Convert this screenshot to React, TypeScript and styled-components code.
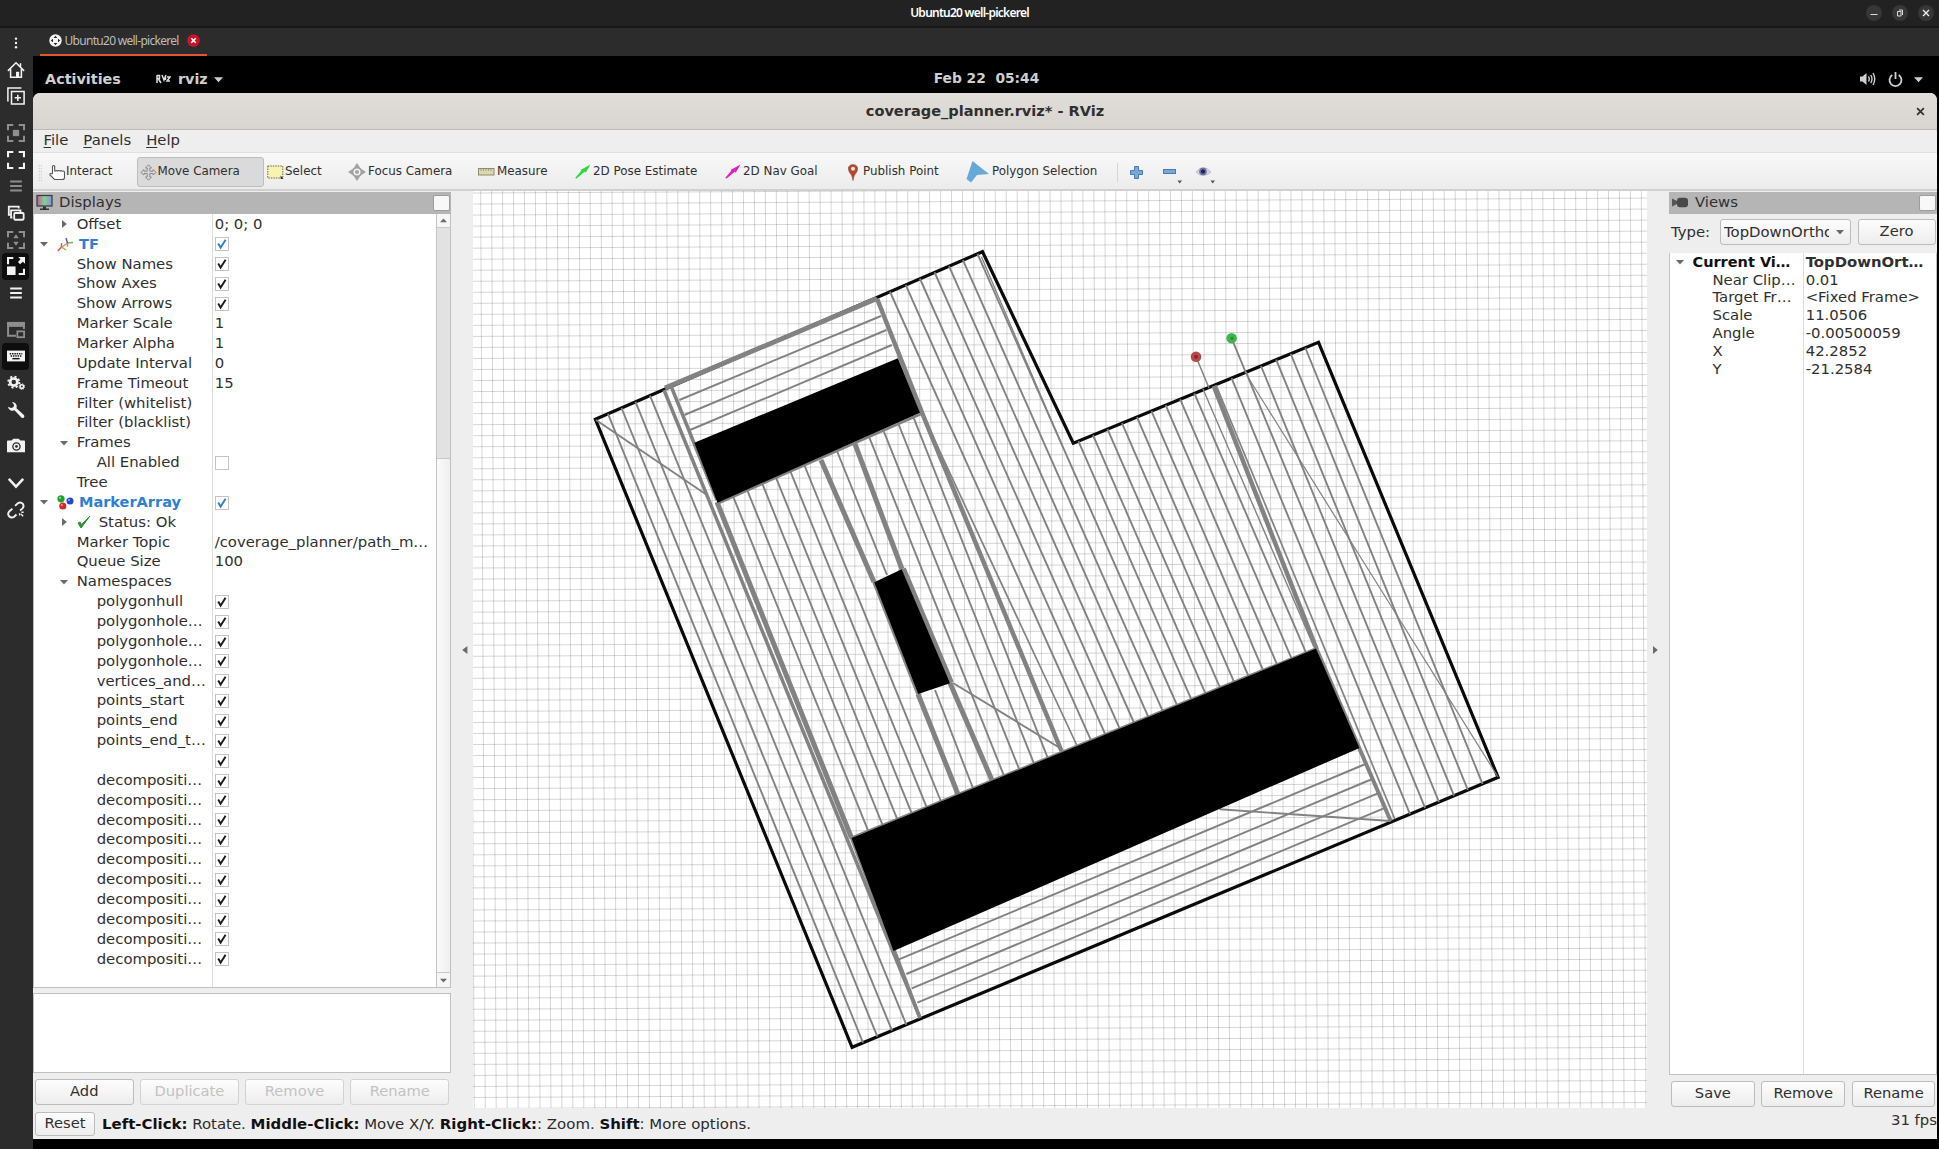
import React from "react";
import styled, { createGlobalStyle, css } from "styled-components";

const Global = createGlobalStyle`
  *, *::before, *::after { box-sizing: border-box; }
  body { margin: 0; background: #000; overflow: hidden; }
`;

/* ---------- shell ---------- */
const Screen = styled.div`
  width: 1939px;
  height: 1149px;
  display: flex;
  flex-direction: column;
  background: #2c2c2c;
  color: #2f2f2f;
  font-family: "DejaVu Sans", sans-serif;
  font-size: 14.85px;
  line-height: 1;
  white-space: nowrap;
`;
const HostBar = styled.header`
  height: 28px;
  flex: none;
  display: grid;
  grid-template-columns: 1fr auto 1fr;
  align-items: center;
  background: #222;
  border-bottom: 2px solid #181818;
  color: #fff;
  font: 600 12px "Noto Sans", sans-serif;
  letter-spacing: -0.75px;
  padding-bottom: 1px;
`;
const HostButtons = styled.div`
  display: flex;
  justify-content: flex-end;
  gap: 10px;
  padding-right: 5px;
`;
const RoundButton = styled.span`
  width: 16px;
  height: 16px;
  border-radius: 50%;
  background: #373737;
  display: grid;
  place-items: center;
`;
const HostBody = styled.div`
  flex: 1;
  display: flex;
  min-height: 0;
`;
const Rail = styled.nav`
  width: 33px;
  flex: none;
  display: flex;
  flex-direction: column;
  align-items: flex-start;
  padding: 1.5px 0 0 2px;
  background: #2c2c2c;
`;
const RailItem = styled.div<{ $gap?: number; $on?: boolean; $dim?: boolean }>`
  width: 27px;
  height: 26.7px;
  flex: none;
  margin-top: ${(p) => p.$gap ?? 0}px;
  border-radius: 4px;
  background: ${(p) => (p.$on ? "#0e0e0e" : "transparent")};
  color: ${(p) => (p.$dim ? "#8e8e8e" : "#f2f2f2")};
  display: grid;
  place-items: center;
`;
const Guest = styled.div`
  flex: 1;
  min-width: 0;
  display: flex;
  flex-direction: column;
  background: #000;
`;
const TabStrip = styled.div`
  height: 27.5px;
  flex: none;
  background: #2c2c2c;
  padding-left: 7px;
`;
const Tab = styled.div`
  width: 167px;
  height: 27.5px;
  display: flex;
  align-items: center;
  padding-left: 9px;
  border-bottom: 2px solid #e2572b;
  color: #bdbdbd;
  font: 400 12px "Noto Sans", sans-serif;
`;
const TabText = styled.span`
  width: 116px;
  margin: 0 6px 0 2.5px;
  letter-spacing: -0.71px;
`;
const GnomeBar = styled.div`
  height: 37.5px;
  flex: none;
  display: grid;
  grid-template-columns: 1fr auto 1fr;
  align-items: center;
  padding: 10px 16px 0 12px;
  color: #cfcfcf;
  font-weight: 700;
  font-size: 14.4px;
`;
const GnomeLeft = styled.div`
  display: flex;
  align-items: center;
`;
const AppName = styled.span`
  margin: 0 6px 0 7px;
`;
const GnomeRight = styled.div`
  display: flex;
  justify-content: flex-end;
  align-items: center;
  gap: 11px;
`;
const Clock = styled.span`
  white-space: pre;
  font-size: 13.8px;
  padding-left: 5px;
`;

/* ---------- window ---------- */
const Win = styled.main`
  height: 1046px;
  margin-right: 2px;
  flex: none;
  display: flex;
  flex-direction: column;
  background: #eee;
  border-radius: 7px 7px 0 0;
  overflow: hidden;
`;
const WinTitle = styled.div`
  height: 36.5px;
  flex: none;
  display: grid;
  grid-template-columns: 1fr auto 1fr;
  align-items: center;
  background: linear-gradient(#e1deda, #d8d5d0);
  border-bottom: 1px solid #bfbbb6;
  padding-top: 1px;
  font-weight: 700;
  font-size: 14.55px;
`;
const CloseBox = styled.div`
  display: flex;
  justify-content: flex-end;
  padding-right: 12px;
`;
const MenuBar = styled.div`
  height: 23.5px;
  flex: none;
  display: flex;
  gap: 15px;
  padding: 3.5px 0 0 10.5px;
  border-bottom: 1px solid #e0e0e0;
`;
const Mnemonic = styled.span`
  text-decoration: underline;
  text-underline-offset: 2px;
`;
const ToolBar = styled.div`
  height: 38px;
  flex: none;
  display: flex;
  align-items: center;
  background: linear-gradient(#f8f8f8, #ececec);
  border-bottom: 2px solid #d0d0d0;
  padding: 2px 0 0 5px;
  font-size: 11.9px;
`;
const Grip = styled.div`
  width: 4px;
  height: 17px;
  margin-right: 3.5px;
  background-image: radial-gradient(#cfcfcf 0.7px, transparent 0.9px);
  background-size: 2.5px 3px;
`;
const Tool = styled.div<{ $w: number; $iconW: number; $active?: boolean }>`
  width: ${(p) => p.$w}px;
  height: 30px;
  flex: none;
  display: grid;
  grid-template-columns: ${(p) => p.$iconW}px auto;
  align-items: center;
  justify-content: start;
  padding-left: 3px;
  ${(p) =>
    p.$active &&
    css`
      padding-left: 2px;
      background: #dadada;
      border: 1px solid #bdbdbd;
      border-radius: 3px;
    `}
`;
const ToolRule = styled.div`
  width: 1px;
  height: 19px;
  background: #d6d6d6;
  margin-right: 12px;
`;
const SmallTool = styled.div`
  width: 33px;
  display: flex;
  align-items: center;
`;
const Work = styled.div`
  flex: 1;
  min-height: 0;
  display: flex;
`;

/* ---------- docks ---------- */
const Dock = styled.section<{ $w: number }>`
  width: ${(p) => p.$w}px;
  flex: none;
  display: flex;
  flex-direction: column;
  padding-top: 1px;
`;
const DockTitle = styled.div`
  height: 22px;
  flex: none;
  display: flex;
  align-items: center;
  background: #b5b5b5;
  padding: 0 1.5px 1px 3px;
  gap: 6px;
`;
const FloatBox = styled.span`
  width: 17px;
  height: 16px;
  margin-left: auto;
  background: #f8f8f8;
  border: 1px solid #9c9c9c;
  border-radius: 2px;
`;
const Tree = styled.div<{ $h: number }>`
  height: ${(p) => p.$h}px;
  flex: none;
  display: flex;
  background: #fff;
  border: 1px solid #c0c0c0;
  border-width: 0 1px 1px 1px;
`;
const Rows = styled.div<{ $split: number }>`
  flex: 1;
  min-width: 0;
  padding-top: 0.3px;
  background: linear-gradient(#dcdcdc, #dcdcdc) ${(p) => p.$split}px 0 / 1px 100% no-repeat;
`;
const Row = styled.div<{ $h: number; $split: number }>`
  height: ${(p) => p.$h}px;
  display: grid;
  grid-template-columns: ${(p) => p.$split}px 1fr;
  align-items: center;
`;
const NameCell = styled.div<{ $indent: number; $tone?: string }>`
  display: flex;
  align-items: center;
  padding-left: ${(p) => p.$indent}px;
  ${(p) => p.$tone && css`color: ${p.$tone}; font-weight: 700; font-size: 14.5px;`}
`;
const Slot = styled.span<{ $w: number }>`
  width: ${(p) => p.$w}px;
  flex: none;
  display: flex;
  align-items: center;
`;
const ValueCell = styled.div<{ $bold?: boolean }>`
  padding-left: 2.7px;
  display: flex;
  align-items: center;
  font-weight: ${(p) => (p.$bold ? 700 : 400)};
`;
const Check = styled.span`
  width: 14px;
  height: 14px;
  border: 1px solid #c4c4c4;
  background: #fff;
  display: grid;
  place-items: center;
  margin-top: 0.5px;
`;
const ScrollBar = styled.div`
  width: 14px;
  border-left: 1px solid #c4c4c4;
  display: flex;
  flex-direction: column;
`;
const ScrollPart = styled.div<{ $h?: number; $bg: string }>`
  ${(p) => (p.$h ? `height: ${p.$h}px;` : "flex: 1;")}
  background: ${(p) => p.$bg};
  border-bottom: 1px solid #c8c8c8;
  display: grid;
  place-items: center;
  &:last-child { border-bottom: 0; }
`;
const HelpSplit = styled.div`
  height: 5px;
  flex: none;
`;
const HelpBox = styled.div`
  height: 79.5px;
  flex: none;
  background: #fff;
  border: 1px solid #c0c0c0;
`;
const ButtonRow = styled.div<{ $pad: string }>`
  display: flex;
  gap: 6.6px;
  padding: ${(p) => p.$pad};
`;
const Button = styled.div<{ $off?: boolean; $w?: number; $h?: number }>`
  ${(p) => (p.$w ? `width: ${p.$w}px; flex: none;` : "flex: 1;")}
  height: ${(p) => p.$h ?? 26}px;
  display: grid;
  place-items: center;
  padding-bottom: 1px;
  font-size: 14.7px;
  color: ${(p) => (p.$off ? "#c2c2c2" : "#2f2f2f")};
  background: linear-gradient(#fdfdfd, #ededed);
  border: 1px solid ${(p) => (p.$off ? "#d2d2d2" : "#bcbcbc")};
  border-radius: 3px;
`;
const Handle = styled.div<{ $w: number; $pad: string }>`
  width: ${(p) => p.$w}px;
  flex: none;
  display: flex;
  align-items: center;
  padding: ${(p) => p.$pad};
`;
const Scene = styled.div`
  width: 1174px;
  height: 917px;
  flex: none;
  background: #fff;
  overflow: hidden;
`;
const TypeRow = styled.div`
  display: flex;
  align-items: center;
  padding: 5px 1.5px 8px 2px;
`;
const Combo = styled.div`
  width: 131px;
  height: 26px;
  margin: 0 7px 0 auto;
  display: flex;
  align-items: center;
  justify-content: space-between;
  padding: 0 6px 1px 3.5px;
  background: linear-gradient(#fdfdfd, #ededed);
  border: 1px solid #bcbcbc;
  border-radius: 3px;
`;
const ComboText = styled.span`
  width: 105px;
  overflow: hidden;
  line-height: 20px;
`;
const StatusBar = styled.footer`
  height: 30px;
  flex: none;
  display: flex;
  align-items: flex-start;
  padding: 2.5px 0 0 2px;
`;
const Hint = styled.div`
  padding: 5px 0 0 7px;
  color: #2a2a2a;
  font-size: 14.95px;
  b { color: #111; }
`;
const Fps = styled.span`
  margin-left: auto;
  padding-top: 1.5px;
`;

/* ---------- icons ---------- */
const Tri = ({ dir = "down", s = 7, c = "#6a6a6a" }: { dir?: string; s?: number; c?: string }) => {
  const d: Record<string, string> = {
    down: "M0 2.5H10L5 8Z",
    up: "M0 7.5H10L5 2Z",
    left: "M8 0V10L1.5 5Z",
    right: "M2.5 0V10L8.5 5Z",
  };
  return (
    <svg width={s} height={s} viewBox="0 0 10 10">
      <path d={d[dir]} fill={c} />
    </svg>
  );
};
const Cross = ({ s, c, w }: { s: number; c: string; w: number }) => (
  <svg width={s} height={s} viewBox="0 0 8 8">
    <path d="M1 1L7 7M7 1L1 7" stroke={c} strokeWidth={w} />
  </svg>
);
const Tick = ({ c = "#1b1b1b" }) => (
  <svg width="12" height="12" viewBox="0 0 12 12">
    <path d="M2.2 5.6L4.6 9.6L9.6 1.8" fill="none" stroke={c} strokeWidth="1.9" />
  </svg>
);
const corners = "M1 7V1H7M13 1H19V7M19 13V19H13M7 19H1V13";
const railArt: Record<string, React.ReactNode> = {
  dots: <g fill="currentColor"><circle cx="10" cy="3.8" r="1.7" /><circle cx="10" cy="10" r="1.7" /><circle cx="10" cy="16" r="1.7" /></g>,
  home: <g><path d="M1 11L10 2L19 11M4 9V18H16V9M15 6V2.5" fill="none" stroke="currentColor" strokeWidth="1.7" /><rect x="10" y="12" width="3.5" height="6" fill="currentColor" /></g>,
  newTab: <g fill="none" stroke="currentColor" strokeWidth="1.7"><path d="M5 5H19V19H5ZM1 16V1H16M12 8.5V15.5M8.5 12H15.5" /></g>,
  frameDot: <g><path d={corners} fill="none" stroke="currentColor" strokeWidth="2.4" /><rect x="6.5" y="6.5" width="7" height="7" fill="currentColor" /></g>,
  frame: <path d={corners} fill="none" stroke="currentColor" strokeWidth="2.6" />,
  menu: <path d="M3.5 5H16.5M3.5 10H16.5M3.5 15H16.5" stroke="currentColor" strokeWidth="2" />,
  windows: <g fill="none" stroke="currentColor" strokeWidth="2"><path d="M4 12H2V3H13V5" /><path d="M6 15H4.500V7H15V9" /><rect x="8" y="10" width="10.500" height="7.500" rx="1" /></g>,
  frameArrows: <g><path d={corners} fill="none" stroke="currentColor" strokeWidth="2.4" /><path d="M10 3.500L13 8H7ZM10 16.500L7 12H13Z" fill="currentColor" /></g>,
  scale: <g><path d="M1 8V1H7M19 13V19H13" fill="none" stroke="currentColor" strokeWidth="2.6" /><rect x="0" y="10.500" width="9.500" height="9.500" fill="currentColor" /><path d="M12.500 0H20V7.500L17.600 5.200L14.500 8L12.200 5.600L15 2.600Z" fill="currentColor" /></g>,
  pip: <g><path d="M1.200 2V16.500H10M18.800 9V2" fill="none" stroke="currentColor" strokeWidth="2.200" /><rect x="0" y="1" width="20" height="5.500" fill="currentColor" /><rect x="11.500" y="11.500" width="7.500" height="6.500" fill="none" stroke="currentColor" strokeWidth="2" /></g>,
  keyboard: <g><rect x="0" y="4" width="20" height="12" fill="currentColor" /><path d="M3 7.500H17M4 10H16" stroke="#111" strokeWidth="1.500" strokeDasharray="1.600 1" /><path d="M6 13H14" stroke="#111" strokeWidth="1.500" /></g>,
  gears: <g fill="none" stroke="currentColor"><circle cx="7.500" cy="9" r="4" strokeWidth="3" /><circle cx="7.500" cy="9" r="6.200" strokeWidth="2" strokeDasharray="2.400 2.470" /><circle cx="16.500" cy="14" r="2" strokeWidth="1.800" /><circle cx="16.500" cy="14" r="3.200" strokeWidth="1" strokeDasharray="1.200 1.300" /></g>,
  wrench: <path d="M1 6.500A5.200 5.200 0 0 0 8.300 10.300L16 18.300Q17.500 19.500 18.800 18.200Q20 17 18.800 15.600L10.500 8A5.200 5.200 0 0 0 5.500 1L8 4.500L7 7L4.500 7.800Z" fill="currentColor" />,
  camera: <g><path d="M0 5Q0 4 1 4H5L7 2H13L15 4H19Q20 4 20 5V17H0Z" fill="currentColor" /><circle cx="10.500" cy="10.500" r="4" fill="none" stroke="#2c2c2c" strokeWidth="1.500" /><circle cx="10.500" cy="10.500" r="1.500" fill="#2c2c2c" /></g>,
  chevron: <path d="M2 5.500L10 14L18 5.500" fill="none" stroke="currentColor" strokeWidth="2.800" />,
  unlink: <g fill="none" stroke="currentColor" strokeWidth="2.100"><path d="M9 5.500L12 2.500Q15 0.500 17.500 3Q19.500 6 17 8.500L14.500 10.500M6 8.500L3 11Q0 14 2.300 17Q5 19.500 8 17.500L10.500 15" /><path d="M14 13.500V16M16 12.500H18.500M15.500 14.500L18 17" strokeWidth="1.500" /></g>,
};
const RailIcon = ({ name, s = 18 }: { name: string; s?: number }) => (
  <svg width={s} height={s} viewBox="0 0 20 20">{railArt[name]}</svg>
);

const HandIcon = () => (
  <svg width="17" height="17" viewBox="0 0 17 17">
    <path d="M3.500 9.500V2.200Q4.500 .8 5.700 2.200V7H6.500Q7.500 6 8.500 7Q9.500 6 11 7Q12 6.200 13 7.200Q15.500 6.500 15.500 8.500V13.500Q15.500 15.500 13.500 15.500H5.500L1 11Q.5 8.500 3.500 10" fill="#fff" stroke="#555" strokeWidth="1.100" />
  </svg>
);
const MoveIcon = () => (
  <svg width="17" height="17" viewBox="0 0 17 17">
    <path d="M8.500 .8L11.500 4H9.800V7.200H13V5.500L16.200 8.500L13 11V9.500H9.800V13H11.500L8.500 16.200L5.500 13H7.200V9.500H4V11L.8 8.500L4 5.500V7.200H7.200V4H5.500Z" fill="#d8d8d8" stroke="#8a8a8a" strokeWidth="1" />
  </svg>
);
const SelectIcon = () => (
  <svg width="17" height="15" viewBox="0 0 17 15">
    <rect x=".8" y="1" width="15" height="12" fill="#f8f3b0" stroke="#6b6940" strokeWidth="1" strokeDasharray="1.500 1" />
    <path d="M13.500 10.500L16.500 13.800L13.800 14Z" fill="#222" />
  </svg>
);
const FocusIcon = () => (
  <svg width="18" height="18" viewBox="0 0 18 18">
    <circle cx="9" cy="9" r="4.500" fill="none" stroke="#9c9c9c" strokeWidth="1.800" />
    <circle cx="9" cy="9" r="2" fill="#a4a4a4" />
    <path d="M9 0L12 4.500H6ZM9 18L6 13.500H12ZM0 9L4.500 6V12ZM18 9L13.500 12V6Z" fill="#a2a2a2" />
  </svg>
);
const RulerIcon = () => (
  <svg width="17" height="10" viewBox="0 0 17 10">
    <rect x=".5" y="1.500" width="15.500" height="6.500" fill="#dcd8ae" stroke="#8d8a70" />
    <path d="M3 2V4M5.500 2V4M8 2V4M10.500 2V4M13 2V4" stroke="#8d8a70" strokeWidth=".7" />
  </svg>
);
const ArrowIcon = ({ c }: { c: string }) => (
  <svg width="16" height="18" viewBox="0 0 16 18">
    <path d="M.3 14.800L6.300 7.800L5.500 7L15.500 1.500L10.800 9.500L9.600 8.800L1.300 15.800Z" fill={c} />
  </svg>
);
const PinIcon = () => (
  <svg width="20" height="17" viewBox="0 0 20 17">
    <path d="M10 16.500Q9.400 11 6.300 8Q4 3 7.500 1.200Q10 0 12.500 1.200Q16 3 13.700 8Q10.600 11 10 16.500Z" fill="#b5492c" stroke="#8e3a24" strokeWidth=".6" />
    <circle cx="10" cy="4.800" r="2" fill="#f0e6e0" />
  </svg>
);
const PolyIcon = () => (
  <svg width="24" height="22" viewBox="0 0 24 22">
    <path d="M6.500 0L23 13L11 14L5 21.500L.5 18Z" fill="#67a8d8" />
  </svg>
);
const MonitorIcon = () => (
  <svg width="17" height="17" viewBox="0 0 17 17">
    <defs>
      <linearGradient id="screen" x1="0" x2="1">
        <stop offset="0" stopColor="#b8609c" />
        <stop offset=".5" stopColor="#86cf98" />
        <stop offset="1" stopColor="#8791df" />
      </linearGradient>
    </defs>
    <rect x="1" y="1.500" width="15" height="10.500" fill="url(#screen)" stroke="#383838" strokeWidth="1.200" />
    <path d="M7 12.500H10V14.500H13V16H4V14.500H7Z" fill="#333" />
  </svg>
);
const CamcorderIcon = () => (
  <svg width="17" height="11" viewBox="0 0 17 11">
    <path d="M0 1.500L5 4V7L0 9.500Z" fill="#555" />
    <rect x="5" y=".8" width="11" height="9.500" rx="3" fill="#484848" />
  </svg>
);
const TfIcon = () => (
  <svg width="17" height="15" viewBox="0 0 17 15">
    <g fill="none" strokeWidth="1.400">
      <path d="M10.500 6L5 10" stroke="#e8933a" />
      <path d="M4.500 10L.8 14" stroke="#e04848" />
      <path d="M4.500 10L9 13" stroke="#7fbf3a" />
      <path d="M4.500 10V6" stroke="#8a6bd0" />
      <path d="M10.500 6L16 5.500" stroke="#6bc04a" />
      <path d="M10.500 6L9 1" stroke="#5a4cd8" />
      <path d="M10.500 6V9.500" stroke="#c978a0" />
    </g>
  </svg>
);
const BallsIcon = () => (
  <svg width="17" height="15" viewBox="0 0 17 15">
    <circle cx="4" cy="3.800" r="3.600" fill="#1fa32a" /><circle cx="3" cy="2.800" r="1" fill="#9be79f" />
    <circle cx="13" cy="6" r="3.500" fill="#2344d6" /><circle cx="12" cy="5" r="1" fill="#9fb0f5" />
    <circle cx="5.800" cy="11" r="3.600" fill="#d62a2a" /><circle cx="4.800" cy="10" r="1" fill="#f4a3a3" />
  </svg>
);
const OkIcon = () => (
  <svg width="14" height="14" viewBox="0 0 14 14">
    <path d="M1 8L4 13L13 1L4.500 9.500L3 7Z" fill="#2f8f35" stroke="#2f8f35" strokeWidth="1" />
  </svg>
);

/* ---------- scene geometry ---------- */
type Seg = [number, number, number, number, number?];
const along = (x: number, a: number[], b: number[]) => a[1] + ((x - a[0]) * (b[1] - a[1])) / (b[0] - a[0]);
const hull = [[595.4, 419.3], [982.5, 251.7], [1073.3, 443.3], [1318.5, 342.3], [1498.1, 777.3], [852.1, 1047.3]];
const holes = [
  [[694.3, 442.7], [897.9, 358.3], [920, 412.7], [717.5, 502.7]],
  [[874.3, 582.3], [901.7, 569.3], [950, 683.3], [918.3, 694]],
  [[851.5, 838], [1316, 648.5], [1359.5, 748], [893.5, 951]],
];
const fan = (tops: number[], ta: number[], tb: number[], bots: number[], ba: number[], bb: number[]): Seg[] =>
  tops.map((x, i) => [x, along(x, ta, tb), bots[i], along(bots[i], ba, bb)]);

const sweeps: Seg[] = [
  ...fan([608, 621.5, 635.5, 650], hull[0], hull[1], [863, 877.4, 892, 906.3], hull[5], hull[4]),
  ...fan([732.9, 747, 762, 775.7, 790, 804, 868.6, 882.9, 897.9, 912.9], holes[0][3], holes[0][2],
    [868.3, 882.7, 897.3, 911.7, 926.7, 941, 1004, 1019.3, 1034, 1047.7], holes[2][0], holes[2][1]),
  ...fan([890, 905.7, 920, 934.6, 949, 963, 977.5], hull[0], hull[1],
    [1091, 1105.3, 1119.7, 1134, 1148.3, 1162.7, 1177], holes[2][0], holes[2][1]),
  ...fan([1078.4, 1093, 1107.5, 1122, 1137, 1151.5, 1165.7, 1180.2, 1194.4], hull[2], hull[3],
    [1191.3, 1205.5, 1220, 1234, 1248.5, 1263, 1277, 1291.5, 1306], holes[2][0], holes[2][1]),
  ...fan([1231.6, 1246, 1261, 1276.2, 1290.7, 1305.3], hull[2], hull[3],
    [1410, 1425.1, 1439, 1454, 1467.8, 1482.5], hull[5], hull[4]),
  [679.3, 400, 881, 316], [684.3, 415, 886.4, 330], [690, 430, 891.8, 345],
  [899, 959.3, 1365.5, 764], [906.3, 974, 1372.3, 779], [911.8, 988.3, 1377.9, 793.3], [917.3, 1002.7, 1383.8, 808.3],
  [837, 451, 887, 575], [935, 690, 973.3, 789],
  [596, 420, 707, 495], [953, 683, 1060, 748], [1219.5, 809.3, 1390.7, 821],
  [981.500, 257, 1061, 443, 1.300],
  [1231.6, 338.3, 1246, 373], [1248.5, 378, 1498, 777, 1.200], [1196, 356.7, 1209, 388, 1.500], [1203, 389, 1314, 647, 1.400],
  [664, 390, 920, 1018, 3.500], [671, 386, 717, 500, 3.500], [717, 502, 851.5, 838, 5], [851.5, 838, 920, 1018, 3.500],
  [665, 388, 877, 298.500, 4.800], [877, 298.500, 923.6, 416.700, 4.500], [923.6, 416.700, 1061.500, 751, 4.500], [923.6, 416.700, 1076.700, 745, 1.700],
  [821, 460, 874, 582, 5], [874, 582, 918, 694, 3.500], [918, 694, 958.300, 795, 5],
  [855, 444, 902, 569, 5], [902, 569, 950, 683, 8], [950, 683, 992.300, 781, 5],
  [1213.700, 386, 1317, 650, 4.500], [1317, 650, 1390.700, 821, 4], [1216, 385, 1394.800, 819, 1.700],
  [717.500, 503.500, 922, 413.500, 2.500], [852, 837, 1316, 648, 1.500],
];
const gridV = Array.from({ length: 112 }, (_, i) => 472 + i * 10.95);
const gridH = Array.from({ length: 88 }, (_, i) => 179 + i * 11.03);

const Map = () => (
  <svg width="1174" height="917" viewBox="473 191 1174 917">
    <g stroke="#000" strokeOpacity="0.16" strokeWidth="1">
      {gridV.map((x) => <line key={x} x1={x - 2.300} y1="191" x2={x + 2.300} y2="1108" />)}
      {gridH.map((y) => <line key={y} x1="473" y1={y + 3} x2="1648" y2={y - 3} />)}
    </g>
    <polygon points={hull.join(" ")} fill="none" stroke="#0a0a0a" strokeWidth="3.200" />
    {sweeps.map(([x1, y1, x2, y2, w = 1.900], i) => (
      <line key={i} x1={x1} y1={y1} x2={x2} y2={y2} stroke="#828282" strokeWidth={w} />
    ))}
    {holes.map((h, i) => <polygon key={i} points={h.join(" ")} fill="#000" />)}
    <circle cx="1196" cy="356.700" r="5.300" fill="#b9494d" /><circle cx="1196" cy="356.700" r="2" fill="#7e2c30" />
    <circle cx="1231.600" cy="338.300" r="5.300" fill="#3fb54c" /><circle cx="1232" cy="338.300" r="1.500" fill="#2d8437" />
  </svg>
);

/* ---------- data ---------- */
type Item = { n: string; lvl: number; open?: string; v?: string; check?: boolean; icon?: string };
const ns = ["polygonhull", "polygonhole…", "polygonhole…", "polygonhole…", "vertices_and…", "points_start", "points_end", "points_end_t…", "",
  ...Array(10).fill("decompositi…")];
const displayRows: Item[] = [
  { n: "Offset", lvl: 2, open: "right", v: "0; 0; 0" },
  { n: "TF", lvl: 1, open: "down", check: true, icon: "tf" },
  { n: "Show Names", lvl: 2, check: true },
  { n: "Show Axes", lvl: 2, check: true },
  { n: "Show Arrows", lvl: 2, check: true },
  { n: "Marker Scale", lvl: 2, v: "1" },
  { n: "Marker Alpha", lvl: 2, v: "1" },
  { n: "Update Interval", lvl: 2, v: "0" },
  { n: "Frame Timeout", lvl: 2, v: "15" },
  { n: "Filter (whitelist)", lvl: 2 },
  { n: "Filter (blacklist)", lvl: 2 },
  { n: "Frames", lvl: 2, open: "down" },
  { n: "All Enabled", lvl: 3, check: false },
  { n: "Tree", lvl: 2 },
  { n: "MarkerArray", lvl: 1, open: "down", check: true, icon: "balls" },
  { n: "Status: Ok", lvl: 2, open: "right", icon: "ok" },
  { n: "Marker Topic", lvl: 2, v: "/coverage_planner/path_m…" },
  { n: "Queue Size", lvl: 2, v: "100" },
  { n: "Namespaces", lvl: 2, open: "down" },
  ...ns.map((n) => ({ n, lvl: 3, check: true })),
];
const viewRows = [["Near Clip…", "0.01"], ["Target Fr…", "<Fixed Frame>"], ["Scale", "11.0506"], ["Angle", "-0.00500059"], ["X", "42.2852"], ["Y", "-21.2584"]];
const rail: [string, number?, string?][] = [
  ["dots"], ["home"], ["newTab"], ["frameDot", 10, "dim"], ["frame"], ["menu", 0, "dim"], ["windows"], ["frameArrows", 0, "dim"],
  ["scale", 0, "on"], ["menu"], ["pip", 10, "dim"], ["keyboard", 0, "on"], ["gears"], ["wrench"], ["camera", 10], ["chevron", 10], ["unlink"],
];
const tools: { t: string; w: number; iw: number; icon: React.ReactNode; on?: boolean }[] = [
  { t: "Interact", w: 91, iw: 17.5, icon: <HandIcon /> },
  { t: "Move Camera", w: 127.5, iw: 18, icon: <MoveIcon />, on: true },
  { t: "Select", w: 81, iw: 18, icon: <SelectIcon /> },
  { t: "Focus Camera", w: 130, iw: 20, icon: <FocusIcon /> },
  { t: "Measure", w: 97, iw: 19, icon: <RulerIcon /> },
  { t: "2D Pose Estimate", w: 150, iw: 18, icon: <ArrowIcon c="#2bdc3c" /> },
  { t: "2D Nav Goal", w: 118, iw: 18, icon: <ArrowIcon c="#e31fc0" /> },
  { t: "Publish Point", w: 123, iw: 20, icon: <PinIcon /> },
  { t: "Polygon Selection", w: 154, iw: 26, icon: <PolyIcon /> },
];

const TreeRow = ({ r }: { r: Item }) => {
  const tone = r.lvl === 1 ? "#2f7fd0" : undefined;
  return (
    <Row $h={19.87} $split={178}>
      <NameCell $indent={r.lvl === 1 ? 6 : r.lvl === 2 ? 26 : 46} $tone={tone}>
        <Slot $w={r.lvl === 1 ? 16.5 : 16.7}>{r.open && <Tri dir={r.open} s={8} />}</Slot>
        {r.icon === "tf" && <Slot $w={22.5}><TfIcon /></Slot>}
        {r.icon === "balls" && <Slot $w={22.5}><BallsIcon /></Slot>}
        {r.icon === "ok" && <Slot $w={22}><OkIcon /></Slot>}
        {r.n}
      </NameCell>
      <ValueCell>
        {r.check !== undefined && <Check>{r.check && <Tick c={tone ?? "#1b1b1b"} />}</Check>}
        {r.v}
      </ValueCell>
    </Row>
  );
};

export default function App() {
  return (
    <Screen>
      <Global />
      <HostBar>
        <span />
        <span>Ubuntu20 well-pickerel</span>
        <HostButtons>
          <RoundButton><svg width="8" height="8"><path d="M0.500 5.500H7.500" stroke="#ddd" /></svg></RoundButton>
          <RoundButton><svg width="8" height="8"><path d="M1.500 2.500H5V7H1.500ZM3 1H6.500V6" fill="none" stroke="#ddd" /></svg></RoundButton>
          <RoundButton><Cross s={8} c="#eee" w={1.4} /></RoundButton>
        </HostButtons>
      </HostBar>
      <HostBody>
        <Rail>
          {rail.map(([name, gap, mode], i) => (
            <RailItem key={i} $gap={gap} $on={mode === "on"} $dim={mode === "dim"}>
              <RailIcon name={name} s={name === "dots" ? 14 : 18} />
            </RailItem>
          ))}
        </Rail>
        <Guest>
          <TabStrip>
            <Tab>
              <svg width="13" height="13" viewBox="0 0 13 13">
                <circle cx="6.500" cy="6.500" r="6.200" fill="#f4f4f4" />
                <path d="M6.500 1.800L8.300 4H4.700ZM6.500 11.200L4.700 9H8.300ZM1.800 6.500L4 4.700V8.300ZM11.200 6.500L9 8.300V4.700Z" fill="#222" />
              </svg>
              <TabText>Ubuntu20 well-pickerel</TabText>
              <svg width="13" height="13" viewBox="0 0 13 13">
                <circle cx="6.500" cy="6.500" r="6.300" fill="#c7162b" />
                <path d="M4.300 4.300L8.700 8.700M8.700 4.300L4.300 8.700" stroke="#fff" strokeWidth="1.500" />
              </svg>
            </Tab>
          </TabStrip>
          <GnomeBar>
            <GnomeLeft>
              <span>Activities</span>
              <Slot $w={35} />
              <svg width="15" height="10" viewBox="0 0 15 10">
                <path d="M1 1V9M1 1.500H3.500V4.500H1M2.500 5L5 9M6 1L8 6L10 1M9.500 3V6M11 3H14L11 7H14" fill="none" stroke="#ddd" strokeWidth="1.500" />
              </svg>
              <AppName>rviz</AppName>
              <Tri s={9} c="#cfcfcf" />
            </GnomeLeft>
            <Clock>Feb 22  05:44</Clock>
            <GnomeRight>
              <svg width="17" height="14" viewBox="0 0 17 14">
                <path d="M0 4.500H2.500L6.500 1V13L2.500 9.500H0Z" fill="#cfcfcf" />
                <path d="M8.500 4.500Q10 7 8.500 9.500M10.800 3Q13.200 7 10.800 11M13 1Q16.500 7 13 13" fill="none" stroke="#cfcfcf" strokeWidth="1.400" />
              </svg>
              <svg width="15" height="15" viewBox="0 0 15 15">
                <path d="M4.300 3A6 6 0 1 0 10.700 3M7.500 0V7" fill="none" stroke="#cfcfcf" strokeWidth="1.800" />
              </svg>
              <Tri s={9} c="#cfcfcf" />
            </GnomeRight>
          </GnomeBar>
          <Win>
            <WinTitle>
              <span />
              <span>coverage_planner.rviz* - RViz</span>
              <CloseBox><Cross s={9} c="#333" w={1.6} /></CloseBox>
            </WinTitle>
            <MenuBar>
              {["File", "Panels", "Help"].map((m) => (
                <span key={m}><Mnemonic>{m[0]}</Mnemonic>{m.slice(1)}</span>
              ))}
            </MenuBar>
            <ToolBar>
              <Grip />
              {tools.map((t) => (
                <Tool key={t.t} $w={t.w} $iconW={t.iw} $active={t.on}>{t.icon}<span>{t.t}</span></Tool>
              ))}
              <ToolRule />
              <SmallTool>
                <svg width="13" height="13" viewBox="0 0 13 13"><path d="M4.500 .5H8.500V4.500H12.500V8.500H8.500V12.500H4.500V8.500H.5V4.500H4.500Z" fill="#7ba7d6" stroke="#4a7ab5" /></svg>
              </SmallTool>
              <SmallTool>
                <svg width="20" height="24" viewBox="0 0 20 24"><rect x=".5" y="9.500" width="12" height="4" fill="#7ba7d6" stroke="#4a7ab5" /><path d="M14.500 20.500H19L16.700 23.500Z" fill="#555" /></svg>
              </SmallTool>
              <SmallTool>
                <svg width="20" height="24" viewBox="0 0 20 24"><path d="M0 12Q7 3 15 12Q7 19 0 12Z" fill="#d6d6e0" stroke="#b2b2bc" strokeWidth=".8" /><circle cx="7" cy="11.500" r="3.800" fill="#6670ac" /><circle cx="7" cy="11.500" r="2" fill="#1c2148" /><path d="M14.500 20.500H19L16.700 23.500Z" fill="#555" /></svg>
              </SmallTool>
            </ToolBar>
            <Work>
              <Dock $w={418}>
                <DockTitle><MonitorIcon /><span>Displays</span><FloatBox /></DockTitle>
                <Tree $h={774}>
                  <Rows $split={177.5}>{displayRows.map((r, i) => <TreeRow key={i} r={r} />)}</Rows>
                  <ScrollBar>
                    <ScrollPart $h={14} $bg="#f6f6f6"><Tri dir="up" /></ScrollPart>
                    <ScrollPart $h={231} $bg="#e2e2e2" />
                    <ScrollPart $bg="linear-gradient(90deg,#fafafa,#efefef)" />
                    <ScrollPart $h={14} $bg="#f6f6f6"><Tri /></ScrollPart>
                  </ScrollBar>
                </Tree>
                <HelpSplit />
                <HelpBox />
                <ButtonRow $pad="6.5px 2px 0 2px">
                  <Button>Add</Button><Button $off>Duplicate</Button><Button $off>Remove</Button><Button $off>Rename</Button>
                </ButtonRow>
              </Dock>
              <Handle $w={22} $pad="0 0 0 10px"><Tri dir="left" s={8} /></Handle>
              <Scene><Map /></Scene>
              <Handle $w={22} $pad="0 0 0 4px"><Tri dir="right" s={8} /></Handle>
              <Dock $w={268}>
                <DockTitle><CamcorderIcon /><span>Views</span><FloatBox /></DockTitle>
                <TypeRow>
                  <span>Type:</span>
                  <Combo><ComboText>TopDownOrtho</ComboText><Tri s={8} /></Combo>
                  <Button $w={78}>Zero</Button>
                </TypeRow>
                <Tree $h={821.5}>
                  <Rows $split={133}>
                    <Row $h={17.85} $split={133}>
                      <NameCell $indent={6} $tone="#111"><Slot $w={16.5}><Tri s={8} /></Slot>Current Vi…</NameCell>
                      <ValueCell $bold>TopDownOrt…</ValueCell>
                    </Row>
                    {viewRows.map(([n, v]) => (
                      <Row key={n} $h={17.85} $split={133}>
                        <NameCell $indent={42.5}>{n}</NameCell>
                        <ValueCell>{v}</ValueCell>
                      </Row>
                    ))}
                  </Rows>
                </Tree>
                <ButtonRow $pad="6.5px 1.5px 0 2px"><Button>Save</Button><Button>Remove</Button><Button>Rename</Button></ButtonRow>
              </Dock>
            </Work>
            <StatusBar>
              <Button $w={60} $h={24}>Reset</Button>
              <Hint><b>Left-Click:</b> Rotate. <b>Middle-Click:</b> Move X/Y. <b>Right-Click:</b>: Zoom. <b>Shift</b>: More options.</Hint>
              <Fps>31 fps</Fps>
            </StatusBar>
          </Win>
        </Guest>
      </HostBody>
    </Screen>
  );
}
